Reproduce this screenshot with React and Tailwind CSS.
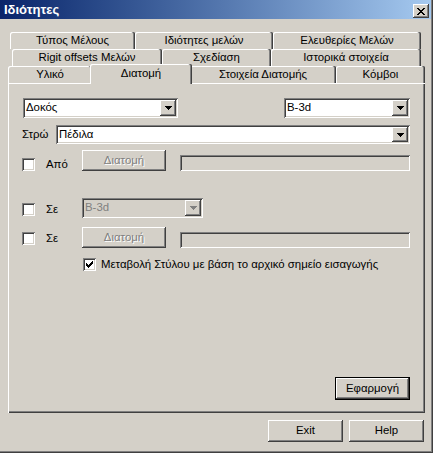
import React from "react";

const RAISED =
  "shadow-[inset_-1px_-1px_#404040,inset_1px_1px_#ffffff,inset_-2px_-2px_#808080]";
const SUNKEN =
  "shadow-[inset_1px_1px_#808080,inset_-1px_-1px_#ffffff,inset_2px_2px_#404040,inset_-2px_-2px_#d4d0c8]";
const TAB =
  "shadow-[inset_-1px_0_#404040,inset_-2px_0_#808080,inset_1px_1px_#ffffff]";

function Arrow({ disabled }) {
  return (
    <svg width="7" height="4" viewBox="0 0 7 4" shapeRendering="crispEdges">
      <path d="M0 0h7v1h-1v1h-1v1h-1v1h-1v-1h-1v-1h-1v-1h-1z" fill={disabled ? "#808080" : "#000"} />
    </svg>
  );
}

function Combo({ text, className, disabled }) {
  return (
    <div
      className={
        "flex p-[2px] " +
        (disabled ? "bg-[#d4d0c8] text-[#808080] " : "bg-white text-black ") +
        SUNKEN +
        " " +
        className
      }
    >
      <div className="flex-1 flex items-center pl-[1px] leading-none">{text}</div>
      <div
        className={
          "w-[16px] flex items-center justify-center bg-[#d4d0c8] " + RAISED
        }
      >
        <Arrow disabled={disabled} />
      </div>
    </div>
  );
}

function Check({ checked, className }) {
  return (
    <div
      className={
        "w-[13px] h-[13px] bg-white flex items-center justify-center shrink-0 " +
        SUNKEN +
        " " +
        (className || "")
      }
    >
      {checked && (
        <svg width="7" height="7" viewBox="0 0 7 7" shapeRendering="crispEdges">
          <path
            d="M6 0h1v3h-1v1h-1v1h-1v1h-1v1h-1v-1h-1v-1h-1v-3h1v1h1v1h1v-1h1v-1h1z"
            fill="#000"
          />
        </svg>
      )}
    </div>
  );
}

function DisabledButton({ className }) {
  return (
    <div
      className={
        "w-[84px] flex items-center justify-center bg-[#d4d0c8] text-[#808080] [text-shadow:1px_1px_0_#ffffff] " +
        RAISED +
        " " +
        className
      }
    >
      Διατομή
    </div>
  );
}

function Field({ className }) {
  return <div className={"flex-1 bg-[#d4d0c8] h-[16px] " + SUNKEN + " " + className} />;
}

function Tab({ w, children }) {
  return (
    <div
      style={{ width: w }}
      className={
        "h-full flex items-center justify-center bg-[#d4d0c8] rounded-t-[2px] leading-none " +
        TAB
      }
    >
      {children}
    </div>
  );
}

function Button({ children, className }) {
  return (
    <div
      className={
        "w-[75px] h-[22px] flex items-center justify-center bg-[#d4d0c8] " +
        RAISED +
        " " +
        (className || "")
      }
    >
      {children}
    </div>
  );
}

export default function App() {
  return (
    <div className="w-[433px] h-[453px] bg-[#d4d0c8] flex flex-col font-['Liberation_Sans',Arial,sans-serif] text-[11.4px] text-black overflow-hidden shadow-[inset_-1px_-1px_#404040,inset_-2px_-2px_#808080]">
      {/* Title bar */}
      <div className="h-[19px] mr-[2px] flex items-start bg-linear-to-r from-[#0a246a] to-[#a6caf0] pl-[4px] pr-[2px]">
        <span className="text-white font-bold text-[13px] flex-1 mt-[3px] leading-none">
          Ιδιότητες
        </span>
        <div
          className={
            "w-[16px] h-[14px] mt-[4px] bg-[#d4d0c8] flex items-center justify-center " +
            RAISED
          }
        >
          <svg width="8" height="7" viewBox="0 0 8 7" shapeRendering="crispEdges">
            <path
              d="M0 0h2v1h1v1h2v-1h1v-1h2v1h-1v1h-1v1h-1v1h1v1h1v1h1v1h-2v-1h-1v-1h-2v1h-1v1h-2v-1h1v-1h1v-1h1v-1h-1v-1h-1v-1h-1z"
              fill="#000"
            />
          </svg>
        </div>
      </div>

      {/* Tabs */}
      <div className="mt-[13px] flex flex-col">
        <div className="flex h-[17px] pl-[10px]">
          <Tab w={125}>Τύπος Μέλους</Tab>
          <Tab w={138}>Ιδιότητες μελών</Tab>
          <Tab w={148}>Ελευθερίες Μελών</Tab>
        </div>
        <div className="flex h-[17px] pl-[12px]">
          <Tab w={150}>Rigit offsets Μελών</Tab>
          <Tab w={109}>Σχεδίαση</Tab>
          <Tab w={150}>Ιστορικά στοιχεία</Tab>
        </div>
        <div className="flex h-[17px] pl-[8px]">
          <Tab w={84}>Υλικό</Tab>
          <div
            className={
              "relative z-10 -mx-[2px] -mt-[2px] w-[102px] h-[20px] shrink-0 flex items-center justify-center pb-[1px] bg-[#d4d0c8] rounded-t-[2px] leading-none " +
              TAB
            }
          >
            Διατομή
          </div>
          <Tab w={146}>Στοιχεία Διατομής</Tab>
          <Tab w={89}>Κόμβοι</Tab>
        </div>
      </div>

      {/* Panel */}
      <div className="ml-[8px] w-[417px] h-[330px] flex flex-col px-[15px] pt-[15px] pb-[13px] shadow-[inset_1px_1px_#ffffff,inset_-1px_-1px_#404040,inset_-2px_-2px_#808080]">
        <div className="flex h-[20px]">
          <Combo text="Δοκός" className="w-[155px]" />
          <Combo text="B-3d" className="w-[126px] ml-auto" />
        </div>
        <div className="flex h-[19px] mt-[7px] items-center">
          <span className="w-[34px] -ml-[1px] leading-none">Στρώ</span>
          <Combo text="Πέδιλα" className="flex-1 h-full" />
        </div>
        <div className="flex h-[21px] mt-[6px] items-start -ml-[1px]">
          <Check className="mt-[8px]" />
          <span className="w-[36px] ml-[11px] mt-[8px] h-[13px] flex items-center">Από</span>
          <DisabledButton className="h-[21px]" />
          <Field className="ml-[14px] mt-[5px]" />
        </div>
        <div className="flex h-[20px] mt-[27px] items-start -ml-[1px]">
          <Check className="mt-[5px]" />
          <span className="w-[36px] ml-[11px] mt-[5px] h-[13px] flex items-center">Σε</span>
          <Combo text="B-3d" disabled className="w-[121px] h-[20px]" />
        </div>
        <div className="flex h-[21px] mt-[9px] items-start -ml-[1px]">
          <Check className="mt-[5px]" />
          <span className="w-[36px] ml-[11px] mt-[5px] h-[13px] flex items-center">Σε</span>
          <DisabledButton className="h-[21px]" />
          <Field className="ml-[14px] mt-[5px]" />
        </div>
        <div className="flex h-[13px] mt-[10px] items-center ml-[60px]">
          <Check checked />
          <span className="ml-[5px] leading-none">
            Μεταβολή Στύλου με βάση το αρχικό σημείο εισαγωγής
          </span>
        </div>
        <div className="mt-auto flex justify-end">
          <div className="w-[75px] h-[23px] border border-black flex">
            <div
              className={
                "flex-1 flex items-center justify-center bg-[#d4d0c8] " + RAISED
              }
            >
              Εφαρμογή
            </div>
          </div>
        </div>
      </div>

      {/* Bottom buttons */}
      <div className="mt-[7px] flex justify-end gap-[6px] pr-[9px]">
        <Button>Exit</Button>
        <Button>Help</Button>
      </div>
    </div>
  );
}
